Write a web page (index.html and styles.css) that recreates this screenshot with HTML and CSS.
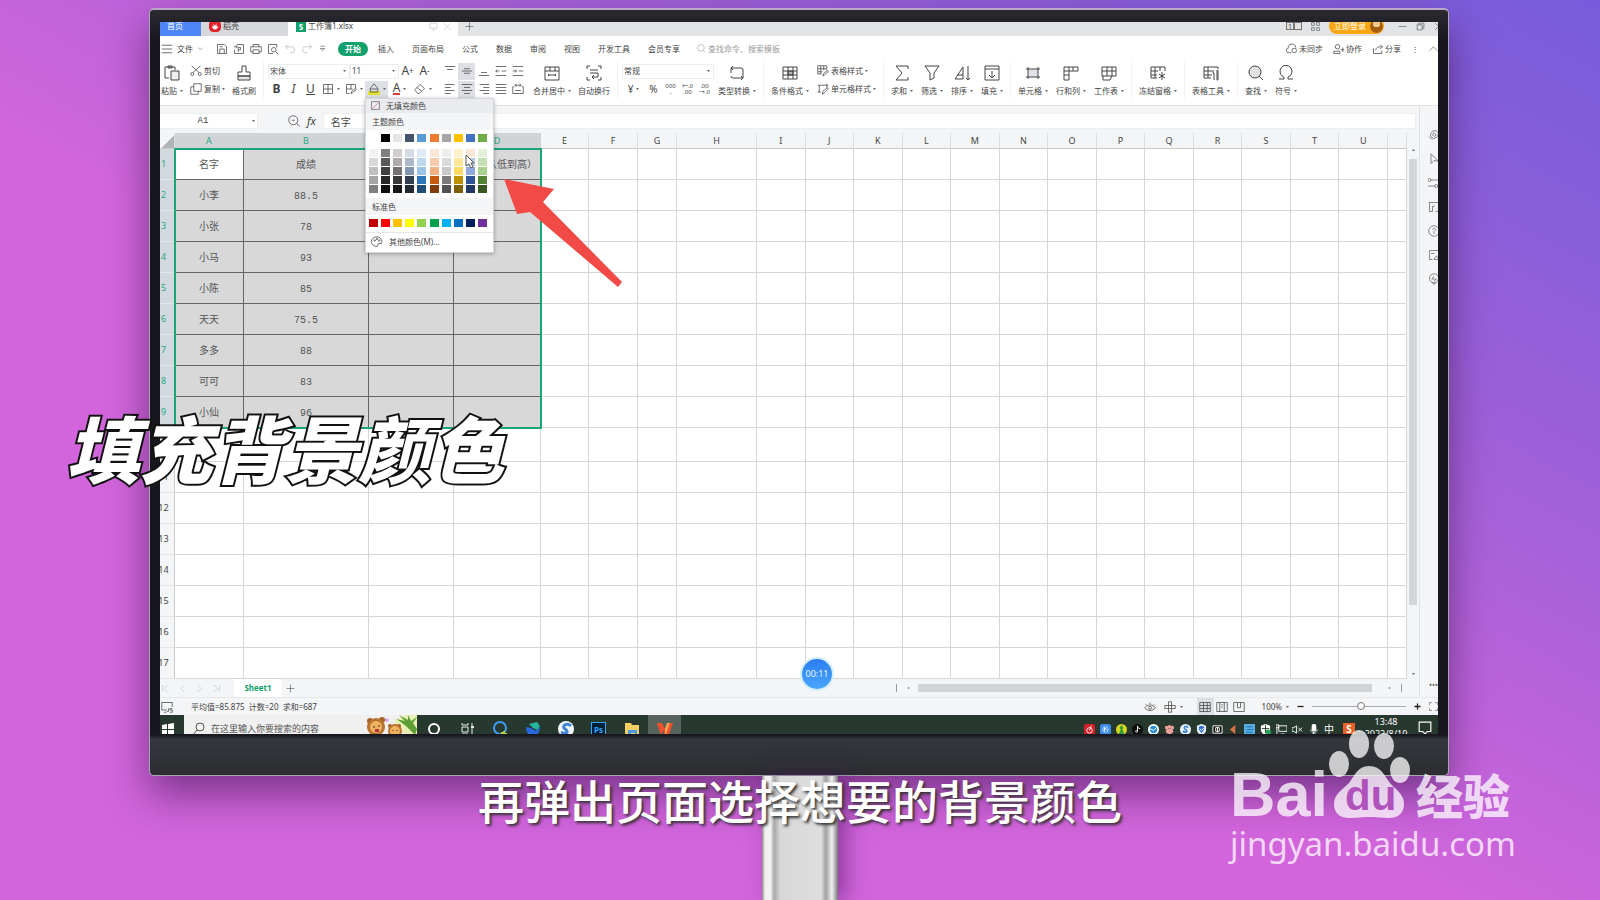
FILE: index.html
```html
<!DOCTYPE html>
<html lang="zh-CN">
<head>
  <meta charset="UTF-8">
  <title>填充背景颜色</title>
  <link rel="stylesheet" href="styles.css">
</head>
<body>

  <!-- Ícones reutilizados -->
  <svg class="sprite" aria-hidden="true">
    <symbol id="i-caret" viewBox="0 0 6 4"><path d="M0 0h6L3 4z" fill="currentColor" stroke="none"/></symbol>
    <symbol id="i-menu" viewBox="0 0 16 16"><path d="M1 3h14M1 8h14M1 13h14"/></symbol>
    <symbol id="i-down" viewBox="0 0 16 16"><path d="M3 6l5 5 5-5"/></symbol>
    <symbol id="i-up" viewBox="0 0 16 16"><path d="M1 12l7-7 7 7"/></symbol>
    <symbol id="i-save" viewBox="0 0 16 16"><path d="M2 2h9l3 3v9H2zM5 14V8h6v6M5 5h4"/></symbol>
    <symbol id="i-pdf" viewBox="0 0 16 16"><path d="M5 2h9v12H2V9M1 5h5M4 3l2 2-2 2M7 12V6h3v3H7"/></symbol>
    <symbol id="i-print" viewBox="0 0 16 16"><path d="M4 5V2h8v3M4 12H1V5h14v7h-3M4 9h8v5H4z"/></symbol>
    <symbol id="i-preview" viewBox="0 0 16 16"><path d="M13 6V2H2v12h6M12 12l3 3"/><circle cx="9" cy="9" r="3"/></symbol>
    <symbol id="i-undo" viewBox="0 0 16 16"><path d="M5 2L2 5l3 3M2 5h8a4 4 0 010 8H8"/></symbol>
    <symbol id="i-redo" viewBox="0 0 16 16"><path d="M11 2l3 3-3 3M14 5H6a4 4 0 000 8h2"/></symbol>
    <symbol id="i-more" viewBox="0 0 16 16"><path d="M4 4h8M4 8l4 4 4-4z"/></symbol>
    <symbol id="i-search" viewBox="0 0 16 16"><circle cx="7" cy="7" r="6"/><path d="M11 11l4 4"/></symbol>
    <symbol id="i-zoom" viewBox="0 0 16 16"><circle cx="7" cy="7" r="6"/><path d="M11 11l5 4M5 7h4"/></symbol>
    <symbol id="i-find" viewBox="0 0 16 16"><circle cx="7" cy="7" r="6" fill="#dfe1e4"/><path d="M11 11l4 4"/></symbol>
    <symbol id="i-cloud" viewBox="0 0 16 16"><path d="M7 13H4a3 3 0 01-1-6 5 5 0 0110-1"/><circle cx="11" cy="10" r="3"/></symbol>
    <symbol id="i-user" viewBox="0 0 16 16"><circle cx="6" cy="5" r="3"/><path d="M1 14v-3h8v3zM13 6v6M10 9h5"/></symbol>
    <symbol id="i-share" viewBox="0 0 16 16"><path d="M2 7v7h11v-4M5 10c0-4 3-5 8-5M11 2l3 3-3 3"/></symbol>
    <symbol id="i-paste" viewBox="0 0 16 16"><path d="M5 13H1V2h10v3M4 1h4v2H4z"/><path d="M7 6h8v9H7z" fill="#eceef0"/></symbol>
    <symbol id="i-cut" viewBox="0 0 16 16"><circle cx="3" cy="12" r="2"/><circle cx="13" cy="12" r="2"/><path d="M2 1l10 9M14 1L4 10"/></symbol>
    <symbol id="i-copy" viewBox="0 0 16 16"><path d="M5 1h10v10H5zM5 5H1v10h10v-4"/></symbol>
    <symbol id="i-brush" viewBox="0 0 16 16"><path d="M2 11h12v4H2z" fill="#e4e6e9"/><path d="M6 1h4v6h4v4H2V7h4z"/></symbol>
    <symbol id="i-borders" viewBox="0 0 16 16"><path d="M2 2h12v12H2zM8 2v12M2 8h12"/></symbol>
    <symbol id="i-draw" viewBox="0 0 16 16"><path d="M14 7V2H2v12h4M2 8h8M8 2v6M8 14l1-3 5-4 1 2-5 4z"/></symbol>
    <symbol id="i-fill" viewBox="0 0 16 16"><path d="M0 11h16v5H0z" fill="#e5e02a" stroke="none"/><path d="M3 7l5-6 5 6v5H3zM3 8h10"/></symbol>
    <symbol id="i-eraser" viewBox="0 0 16 16"><path d="M1 9l7-7 6 5-7 7H5zM4 6l6 5"/></symbol>
    <symbol id="i-vtop" viewBox="0 0 16 16"><path d="M1 2h14M4 6h8"/></symbol>
    <symbol id="i-vmid" viewBox="0 0 16 16"><path d="M4 5h8M1 8h14M4 11h8"/></symbol>
    <symbol id="i-vbot" viewBox="0 0 16 16"><path d="M4 10h8M1 14h14"/></symbol>
    <symbol id="i-outdent" viewBox="0 0 16 16"><path d="M1 2h14M9 8h6M1 14h14M6 8H1M3 6L1 8l2 2"/></symbol>
    <symbol id="i-indent" viewBox="0 0 16 16"><path d="M1 2h14M9 8h6M1 14h14M1 8h5M4 6l2 2-2 2"/></symbol>
    <symbol id="i-left" viewBox="0 0 16 16"><path d="M1 2h13M1 6h8M1 10h13M1 14h8"/></symbol>
    <symbol id="i-center" viewBox="0 0 16 16"><path d="M1 2h14M4 6h8M1 10h14M4 14h8"/></symbol>
    <symbol id="i-right" viewBox="0 0 16 16"><path d="M2 2h13M7 6h8M2 10h13M7 14h8"/></symbol>
    <symbol id="i-just" viewBox="0 0 16 16"><path d="M1 2h14M1 6h14M1 10h14M1 14h14"/></symbol>
    <symbol id="i-spread" viewBox="0 0 16 16"><path d="M1 5v9h14V5M1 5h2M13 5h2M4 3h8M6 1L4 3l2 2M10 1l2 2-2 2M4 10h8"/></symbol>
    <symbol id="i-merge" viewBox="0 0 16 16"><path d="M1 2h14v13H1zM1 6h14M6 2v4M11 2v4M4 10h8M5 9l-1 1 1 1M11 9l1 1-1 1"/></symbol>
    <symbol id="i-wrap" viewBox="0 0 16 16"><path d="M1 4V1h3M12 1h3v3M15 12v3h-3M4 15H1v-3M4 5h8M4 8h8v4H7M8 10l-2 2 2 2"/></symbol>
    <symbol id="i-convert" viewBox="0 0 16 16"><path d="M2 8V3h10a2 2 0 012 2v3M4 1L2 3l2 2M14 8v5H4a2 2 0 01-2-2M12 11l2 2-2 2"/></symbol>
    <symbol id="i-cond" viewBox="0 0 16 16"><path d="M6 6h5v4H6z" fill="#b4b8be"/><path d="M1 2h14v12H1zM1 6h14M1 10h14M6 2v12M11 2v12"/></symbol>
    <symbol id="i-tstyle" viewBox="0 0 16 16"><path d="M6 12H1V1h12v5M1 5h12M5 1v11M9 1v6M1 9h6M8 15l1-4 5-4 1 2-5 4z"/></symbol>
    <symbol id="i-cstyle" viewBox="0 0 16 16"><path d="M3 13V3M1 3h14M13 1v5M1 12h4M7 15l1-4 6-5 1 2-5 5z"/></symbol>
    <symbol id="i-sum" viewBox="0 0 16 16"><path d="M14 4V1H2l6 7-6 7h12v-3"/></symbol>
    <symbol id="i-filter" viewBox="0 0 16 16"><path d="M1 1h14l-5 7v5l-4 2V8z"/></symbol>
    <symbol id="i-sort" viewBox="0 0 16 16"><path d="M1 14L9 2v12M3 10h6M1 14h8M14 1v14M12 13l2 2 2-2"/></symbol>
    <symbol id="i-filldown" viewBox="0 0 16 16"><path d="M1 1h14v14H1zM1 4h14M8 6v7M5 10l3 3 3-3"/></symbol>
    <symbol id="i-cell" viewBox="0 0 16 16"><path d="M3 4h10v8H3z" fill="#dfe3ea" stroke="none"/><path d="M3 2v12M13 2v12M1 4h14M1 12h14"/></symbol>
    <symbol id="i-rowcol" viewBox="0 0 16 16"><path d="M1 2h14v4H6v9H1zM1 6h5M1 10h5M6 2v4M10 2v4"/></symbol>
    <symbol id="i-sheet" viewBox="0 0 16 16"><path d="M1 2h14v9h-4l-2 4H2v-4H1zM1 6h14M6 2v9M11 2v9M1 11h10"/></symbol>
    <symbol id="i-freeze" viewBox="0 0 16 16"><path d="M7 13H1V2h14v4M1 6h7M1 10h6M5 2v11M10 2v4M12 7v8M9 9l6 4M15 9l-6 4"/></symbol>
    <symbol id="i-tools" viewBox="0 0 16 16"><path d="M8 13H1V2h14v2M1 6h8M1 10h8M5 2v11M10 5v3h1v7M14 5v10h1V5"/></symbol>
    <symbol id="i-omega" viewBox="0 0 16 16"><path d="M1 14h5v-2a6 6 0 114 0v2h5"/></symbol>
    <symbol id="i-palette" viewBox="0 0 16 16"><path d="M8 1a7 6 0 000 13c2 0 0-3 2-4h4c2-4-2-9-6-9z"/><circle cx="5" cy="6" r="1"/><circle cx="8" cy="4" r="1"/><circle cx="11" cy="6" r="1"/></symbol>
    <symbol id="i-first" viewBox="0 0 16 16"><path d="M3 2v12M12 2L6 8l6 6"/></symbol>
    <symbol id="i-prev" viewBox="0 0 16 16"><path d="M11 2L5 8l6 6"/></symbol>
    <symbol id="i-next" viewBox="0 0 16 16"><path d="M5 2l6 6-6 6"/></symbol>
    <symbol id="i-last" viewBox="0 0 16 16"><path d="M13 2v12M4 2l6 6-6 6"/></symbol>
    <symbol id="i-plus" viewBox="0 0 16 16"><path d="M8 1v14M1 8h14"/></symbol>
    <symbol id="i-minus" viewBox="0 0 16 16"><path d="M1 8h14"/></symbol>
    <symbol id="i-close" viewBox="0 0 16 16"><path d="M2 2l12 12M14 2L2 14"/></symbol>
    <symbol id="i-screen" viewBox="0 0 16 16"><path d="M2 2h12v9H2zM5 14h6"/></symbol>
    <symbol id="i-js" viewBox="0 0 16 16"><path d="M8 12H1V2h14v6M4 15h3M10 10v4H8M15 10h-3v2h3v3h-3"/></symbol>
    <symbol id="i-restore" viewBox="0 0 16 16"><path d="M2 5h9v9H2zM5 5V2h9v9h-3"/></symbol>
    <symbol id="i-apps" viewBox="0 0 16 16"><path d="M1 1h5v5H1zM10 1h5v5h-5zM1 10h5v5H1zM10 10h5v5h-5z"/></symbol>
    <symbol id="i-eye" viewBox="0 0 16 16"><path d="M1 9c3-5 11-5 14 0-3 5-11 5-14 0zM2 4l1 1M8 2v2M14 4l-1 1"/><circle cx="8" cy="9" r="2"/></symbol>
    <symbol id="i-cross" viewBox="0 0 16 16"><path d="M6 1h4v14H6zM1 6h14v4H1z"/></symbol>
    <symbol id="i-grid" viewBox="0 0 16 16"><path d="M1 2h14v12H1zM1 6h14M1 10h14M6 2v12M11 2v12"/></symbol>
    <symbol id="i-page" viewBox="0 0 16 16"><path d="M1 2h14v12H1zM5 2v12M11 2v12M7 5h2M7 8h2"/></symbol>
    <symbol id="i-split" viewBox="0 0 16 16"><path d="M1 2h14v12H1zM6 2v7h4V2"/></symbol>
    <symbol id="i-full" viewBox="0 0 16 16"><path d="M1 5V1h4M11 1h4v4M15 11v4h-4M5 15H1v-4"/></symbol>
    <symbol id="i-rocket" viewBox="0 0 16 16"><path d="M3 8l3-5 5-1 3 4-2 5-5 2zM6 8l2-3 3 3-3 2zM1 10l5 4"/></symbol>
    <symbol id="i-arrow" viewBox="0 0 16 16"><path d="M4 1v13l4-4 6 1z"/></symbol>
    <symbol id="i-sliders" viewBox="0 0 16 16"><path d="M4 4h12M0 12h9M13 12h3"/><circle cx="2" cy="4" r="2"/><circle cx="11" cy="12" r="2"/></symbol>
    <symbol id="i-chart" viewBox="0 0 16 16"><path d="M1 2h14M2 2v12h4M6 14V7h3M10 14h5"/></symbol>
    <symbol id="i-help" viewBox="0 0 16 16"><circle cx="8" cy="8" r="7"/><path d="M6 6c1-3 5-1 4 1L8 9v3"/></symbol>
    <symbol id="i-image" viewBox="0 0 16 16"><path d="M2 6V2h12v5M2 6v8h4M4 6h5M8 14l3-5 4 5z"/></symbol>
    <symbol id="i-bulb" viewBox="0 0 16 16"><circle cx="8" cy="7" r="6"/><path d="M5 13l3 2 3-2M8 4L5 8h6l-3 3"/></symbol>
    <symbol id="i-shell" viewBox="0 0 16 16"><rect width="16" height="16" rx="6" fill="#e3232c" stroke="none"/><path d="M4 8c0 6 8 6 8 0l-2 1V4L8 8 6 5v4z" fill="#fff" stroke="none"/></symbol>
  </svg>

  <div class="monitor">
    <div class="screen">
      <div class="app">

        <!-- Abas de documentos -->
        <div class="doc-tabs">
          <a class="doc-tab home" href="#home">首页</a>
          <a class="doc-tab shell" href="#shell"><svg class="icon"><use href="#i-shell"/></svg>稻壳</a>
          <a class="doc-tab current" href="#book"><span class="s-logo">S</span>工作簿1.xlsx
            <span class="tab-icons"><svg class="icon small"><use href="#i-screen"/></svg><svg class="icon small"><use href="#i-close"/></svg></span></a>
          <button class="tool plus" aria-label="新建"><svg class="icon small"><use href="#i-plus"/></svg></button>
          <div class="window-tools">
            <span class="pages"><i>1</i><i></i></span>
            <svg class="icon small"><use href="#i-apps"/></svg>
            <button class="login">立即登录<span class="avatar"></span></button>
            <svg class="icon small"><use href="#i-minus"/></svg>
            <svg class="icon small"><use href="#i-restore"/></svg>
            <svg class="icon small"><use href="#i-close"/></svg>
          </div>
        </div>

        <!-- Menu -->
        <nav class="menu">
          <button class="tool file"><svg class="icon"><use href="#i-menu"/></svg>文件<svg class="icon tiny"><use href="#i-down"/></svg></button>
          <div class="quick">
            <svg class="icon"><use href="#i-save"/></svg>
            <svg class="icon"><use href="#i-pdf"/></svg>
            <svg class="icon"><use href="#i-print"/></svg>
            <svg class="icon"><use href="#i-preview"/></svg>
            <svg class="icon faint"><use href="#i-undo"/></svg>
            <svg class="icon faint"><use href="#i-redo"/></svg>
            <svg class="icon small"><use href="#i-more"/></svg>
          </div>
          <div class="menu-links">
            <a class="active" href="#start">开始</a>
            <a href="#insert">插入</a>
            <a href="#layout">页面布局</a>
            <a href="#formula">公式</a>
            <a href="#data">数据</a>
            <a href="#review">审阅</a>
            <a href="#view">视图</a>
            <a href="#dev">开发工具</a>
            <a href="#vip">会员专享</a>
          </div>
          <label class="command"><svg class="icon small"><use href="#i-search"/></svg><input type="text" placeholder="查找命令、搜索模板"></label>
          <div class="menu-right">
            <button class="tool"><svg class="icon"><use href="#i-cloud"/></svg>未同步</button>
            <button class="tool"><svg class="icon"><use href="#i-user"/></svg>协作</button>
            <button class="tool"><svg class="icon"><use href="#i-share"/></svg>分享</button>
            <span class="dots">⋮</span>
            <svg class="icon small"><use href="#i-up"/></svg>
          </div>
        </nav>

        <!-- Faixa de opções -->
        <div class="ribbon">
          <div class="group">
            <button class="big"><svg class="icon"><use href="#i-paste"/></svg><span>粘贴<svg class="caret"><use href="#i-caret"/></svg></span></button>
            <div class="stack">
              <button class="tool"><svg class="icon"><use href="#i-cut"/></svg>剪切</button>
              <button class="tool"><svg class="icon"><use href="#i-copy"/></svg>复制<svg class="caret"><use href="#i-caret"/></svg></button>
            </div>
            <button class="big"><svg class="icon"><use href="#i-brush"/></svg><span>格式刷</span></button>
          </div>

          <div class="group tight">
            <div class="stack">
              <div class="line">
                <span class="pick font"><select aria-label="字体"><option>宋体</option></select><svg class="caret"><use href="#i-caret"/></svg></span>
                <span class="pick size"><select aria-label="字号"><option>11</option></select><svg class="caret"><use href="#i-caret"/></svg></span>
                <button class="cell letter">A<sup>+</sup></button>
                <button class="cell letter">A<sup>-</sup></button>
              </div>
              <div class="line">
                <button class="cell letter"><b>B</b></button>
                <button class="cell letter"><i>I</i></button>
                <button class="cell letter"><u>U</u></button>
                <button class="cell split"><svg class="icon"><use href="#i-borders"/></svg><svg class="caret"><use href="#i-caret"/></svg></button>
                <button class="cell split"><svg class="icon"><use href="#i-draw"/></svg><svg class="caret"><use href="#i-caret"/></svg></button>
                <div class="fill-wrap">
                  <button class="cell split on" aria-label="填充颜色"><svg class="icon"><use href="#i-fill"/></svg><svg class="caret"><use href="#i-caret"/></svg></button>
                  <div class="palette">
                    <button class="no-fill"><svg class="icon none" viewBox="0 0 16 16"><path d="M1 1h14v14H1z"/><path d="M2 14L14 2" stroke="#d0557a"/></svg>无填充颜色</button>
                    <div class="palette-title">主题颜色</div>
                    <div class="swatches" id="themeColors"></div>
                    <div class="swatches shades" id="shadeColors"></div>
                    <div class="palette-title standard">标准色</div>
                    <div class="swatches" id="standardColors"></div>
                    <button class="other"><svg class="icon"><use href="#i-palette"/></svg>其他颜色(M)...</button>
                    <svg class="pointer" viewBox="0 0 10 14"><path d="M1 1v11l3-2 2 4 2-1-2-4h3z" fill="#fff" stroke="#555"/></svg>
                  </div>
                </div>
                <button class="cell split letter"><span class="font-color">A</span><svg class="caret"><use href="#i-caret"/></svg></button>
                <button class="cell split"><svg class="icon"><use href="#i-eraser"/></svg><svg class="caret"><use href="#i-caret"/></svg></button>
              </div>
            </div>
            <div class="stack">
              <div class="line">
                <button class="cell"><svg class="icon"><use href="#i-vtop"/></svg></button>
                <button class="cell on"><svg class="icon"><use href="#i-vmid"/></svg></button>
                <button class="cell"><svg class="icon"><use href="#i-vbot"/></svg></button>
                <button class="cell"><svg class="icon"><use href="#i-outdent"/></svg></button>
                <button class="cell"><svg class="icon"><use href="#i-indent"/></svg></button>
              </div>
              <div class="line">
                <button class="cell"><svg class="icon"><use href="#i-left"/></svg></button>
                <button class="cell on"><svg class="icon"><use href="#i-center"/></svg></button>
                <button class="cell"><svg class="icon"><use href="#i-right"/></svg></button>
                <button class="cell"><svg class="icon"><use href="#i-just"/></svg></button>
                <button class="cell"><svg class="icon"><use href="#i-spread"/></svg></button>
              </div>
            </div>
            <button class="big"><svg class="icon"><use href="#i-merge"/></svg><span>合并居中<svg class="caret"><use href="#i-caret"/></svg></span></button>
            <button class="big"><svg class="icon"><use href="#i-wrap"/></svg><span>自动换行</span></button>
          </div>

          <div class="group tight number">
            <div class="stack">
              <div class="line">
                <span class="pick format"><select aria-label="数字格式"><option>常规</option></select><svg class="caret"><use href="#i-caret"/></svg></span>
              </div>
              <div class="line">
                <button class="cell split letter">¥<svg class="caret"><use href="#i-caret"/></svg></button>
                <button class="cell letter">%</button>
                <button class="cell decimals">000<br>,</button>
                <button class="cell decimals">←.0<br>.00</button>
                <button class="cell decimals">.00<br>→.0</button>
              </div>
            </div>
            <button class="big"><svg class="icon"><use href="#i-convert"/></svg><span>类型转换<svg class="caret"><use href="#i-caret"/></svg></span></button>
          </div>

          <div class="group">
            <button class="big"><svg class="icon"><use href="#i-cond"/></svg><span>条件格式<svg class="caret"><use href="#i-caret"/></svg></span></button>
            <div class="stack">
              <button class="tool"><svg class="icon"><use href="#i-tstyle"/></svg>表格样式<svg class="caret"><use href="#i-caret"/></svg></button>
              <button class="tool"><svg class="icon"><use href="#i-cstyle"/></svg>单元格样式<svg class="caret"><use href="#i-caret"/></svg></button>
            </div>
          </div>

          <div class="group">
            <button class="big"><svg class="icon"><use href="#i-sum"/></svg><span>求和<svg class="caret"><use href="#i-caret"/></svg></span></button>
            <button class="big"><svg class="icon"><use href="#i-filter"/></svg><span>筛选<svg class="caret"><use href="#i-caret"/></svg></span></button>
            <button class="big"><svg class="icon"><use href="#i-sort"/></svg><span>排序<svg class="caret"><use href="#i-caret"/></svg></span></button>
            <button class="big"><svg class="icon"><use href="#i-filldown"/></svg><span>填充<svg class="caret"><use href="#i-caret"/></svg></span></button>
          </div>

          <div class="group">
            <button class="big"><svg class="icon"><use href="#i-cell"/></svg><span>单元格<svg class="caret"><use href="#i-caret"/></svg></span></button>
            <button class="big"><svg class="icon"><use href="#i-rowcol"/></svg><span>行和列<svg class="caret"><use href="#i-caret"/></svg></span></button>
            <button class="big"><svg class="icon"><use href="#i-sheet"/></svg><span>工作表<svg class="caret"><use href="#i-caret"/></svg></span></button>
          </div>

          <div class="group">
            <button class="big"><svg class="icon"><use href="#i-freeze"/></svg><span>冻结窗格<svg class="caret"><use href="#i-caret"/></svg></span></button>
          </div>
          <div class="group">
            <button class="big"><svg class="icon"><use href="#i-tools"/></svg><span>表格工具<svg class="caret"><use href="#i-caret"/></svg></span></button>
          </div>
          <div class="group">
            <button class="big"><svg class="icon"><use href="#i-find"/></svg><span>查找<svg class="caret"><use href="#i-caret"/></svg></span></button>
            <button class="big"><svg class="icon"><use href="#i-omega"/></svg><span>符号<svg class="caret"><use href="#i-caret"/></svg></span></button>
          </div>
        </div>

        <div class="work">
          <div class="book">
            <!-- Barra de fórmulas -->
            <div class="formula">
              <label class="name-box"><input type="text" value="A1" aria-label="名称框"><svg class="caret"><use href="#i-caret"/></svg></label>
              <svg class="icon"><use href="#i-zoom"/></svg>
              <span class="fx">fx</span>
              <input class="formula-input" type="text" value="名字" aria-label="编辑栏">
            </div>

            <!-- Planilha -->
            <div class="sheet">
              <div class="cells">
                <table id="grid">
                  <colgroup id="gridCols"></colgroup>
                  <thead></thead>
                  <tbody></tbody>
                </table>
                <div class="selection"></div>
              </div>
              <div class="vscroll"><svg class="caret flip"><use href="#i-caret"/></svg><span class="thumb"></span><svg class="caret"><use href="#i-caret"/></svg></div>
            </div>

            <div class="sheet-tabs">
              <svg class="icon small faint"><use href="#i-first"/></svg>
              <svg class="icon small faint"><use href="#i-prev"/></svg>
              <svg class="icon small faint"><use href="#i-next"/></svg>
              <svg class="icon small faint"><use href="#i-last"/></svg>
              <a href="#sheet1">Sheet1</a>
              <button class="tool" aria-label="新建工作表"><svg class="icon small"><use href="#i-plus"/></svg></button>
              <div class="hscroll"><svg class="caret toleft"><use href="#i-caret"/></svg><span class="thumb"></span><svg class="caret toright"><use href="#i-caret"/></svg></div>
            </div>
          </div>

          <aside class="side">
            <svg class="icon"><use href="#i-rocket"/></svg>
            <svg class="icon"><use href="#i-arrow"/></svg>
            <svg class="icon"><use href="#i-sliders"/></svg>
            <svg class="icon"><use href="#i-chart"/></svg>
            <svg class="icon"><use href="#i-help"/></svg>
            <svg class="icon"><use href="#i-image"/></svg>
            <svg class="icon"><use href="#i-bulb"/></svg>
            <span class="side-more">•••</span>
          </aside>
        </div>

        <!-- Barra de status -->
        <div class="status">
          <svg class="icon"><use href="#i-js"/></svg>
          <span class="stats">平均值=85.875&nbsp; 计数=20&nbsp; 求和=687</span>
          <div class="status-right">
            <svg class="icon"><use href="#i-eye"/></svg>
            <span class="pair"><svg class="icon"><use href="#i-cross"/></svg><svg class="caret"><use href="#i-caret"/></svg></span>
            <span class="views">
              <button class="cell on" aria-label="普通视图"><svg class="icon"><use href="#i-grid"/></svg></button>
              <button class="cell" aria-label="页面布局"><svg class="icon"><use href="#i-page"/></svg></button>
              <button class="cell" aria-label="分页预览"><svg class="icon"><use href="#i-split"/></svg></button>
            </span>
            <span class="pair">100%<svg class="caret"><use href="#i-caret"/></svg></span>
            <svg class="icon tiny bold"><use href="#i-minus"/></svg>
            <input type="range" min="0" max="100" value="52" aria-label="缩放">
            <svg class="icon tiny bold"><use href="#i-plus"/></svg>
            <svg class="icon small"><use href="#i-full"/></svg>
          </div>
        </div>

        <!-- Barra de tarefas -->
        <div class="taskbar">
          <button class="start" aria-label="开始"><svg viewBox="0 0 12 12"><path d="M0 2l5-1v5H0zM6 1l6-1v6H6zM0 7h5v5l-5-1zM6 7h6v5H6z" fill="#fff"/></svg></button>
          <label class="task-search">
            <svg class="icon"><circle cx="7" cy="4" r="4"/><path d="M4 7l-4 5"/></svg>
            <input type="text" placeholder="在这里输入你要搜索的内容">
            <svg class="bears" viewBox="0 0 50 20">
              <path d="M27 6l12-6h11v20H38z" fill="#e8efb4"/>
              <path d="M29 4l9 2-6-6 9 5 0-5 3 6 6-4-4 6 4 6-2 6c-5-5-9-10-19-16z" fill="#5e9e35"/>
              <path d="M19 3l3 2-2 2-3-2z" fill="#d49be4"/>
              <circle cx="3" cy="6" r="3" fill="#a5642d"/><circle cx="15" cy="5" r="3" fill="#a5642d"/>
              <circle cx="9" cy="12" r="9" fill="#b8732f"/><circle cx="9" cy="12" r="6" fill="#f0b15f"/>
              <circle cx="23" cy="11" r="2" fill="#a5642d"/><circle cx="32" cy="11" r="2" fill="#a5642d"/>
              <circle cx="28" cy="16" r="7" fill="#b8732f"/><circle cx="28" cy="16" r="5" fill="#f0b15f"/>
              <path d="M7 11v2M12 10v2M26 15v1M30 15v1" stroke="#4a2a14"/><path d="M8 14h4v3H8z" fill="#b0333e"/>
            </svg>
          </label>
          <div class="apps">
            <span><svg viewBox="0 0 16 16"><circle cx="8" cy="8" r="5" fill="none" stroke="#fff" stroke-width="2"/></svg></span>
            <span><svg viewBox="0 0 16 16" fill="none" stroke="#e6ebe8"><path d="M3 2v2h6V2M3 6h6v5H3zM3 15v-2h6v2M13 2v13"/><path d="M12 6h3" stroke-width="2"/></svg></span>
            <span><svg viewBox="0 0 16 16" fill="none" stroke-width="2"><circle cx="8" cy="7" r="6" stroke="#3c9cf0"/><path d="M9 12l6 1M12 10v5" stroke="#b8d63c"/></svg></span>
            <span><svg viewBox="0 0 16 16"><path d="M1 6c0 12 14 12 14 0l-4 4-5-3z" fill="#2867dc"/><path d="M4 3l8-2 3 4-3 4-4-2z" fill="#25b5a0"/></svg></span>
            <span><svg viewBox="0 0 16 16"><circle cx="8" cy="8" r="8" fill="#f2f6fa"/><path d="M13 5C9 1 3 5 7 8s2 6-4 3" fill="none" stroke="#3f86d8" stroke-width="3"/></svg></span>
            <span><b class="ps">Ps</b></span>
            <span><svg viewBox="0 0 16 16"><path d="M1 2h6l1 2h7v12H1z" fill="#f4cf63"/><path d="M4 9h9v7h-2v-4H7v4H4z" fill="#4b9ade"/></svg></span>
            <span class="running"><svg viewBox="0 0 16 16"><path d="M0 2h5l3 6 2-6h6l-5 14H8L6 9l-2 6z" fill="#f0502b"/><path d="M8 8l2-6h3L8 16z" fill="#ffa24d"/></svg></span>
          </div>
          <div class="tray">
            <span><svg viewBox="0 0 12 12"><rect width="12" height="12" rx="2" fill="#d32127"/><circle cx="6" cy="7" r="3" fill="none" stroke="#fff"/><path d="M6 7l2-5" stroke="#fff"/></svg></span>
            <span><svg viewBox="0 0 12 12"><rect width="12" height="12" rx="3" fill="#3d8de8"/><circle cx="6" cy="6" r="3" fill="none" stroke="#bfe0ff"/><path d="M5 8V4l3 3" fill="none" stroke="#fff"/></svg></span>
            <span><svg viewBox="0 0 12 12"><circle cx="6" cy="6" r="6" fill="#d6d51f"/><path d="M6 1l2 3-1 2 2 5H3l2-5-1-2z" fill="#2f9e3c"/></svg></span>
            <span><svg viewBox="0 0 12 12"><circle cx="6" cy="6" r="6" fill="#0c0c0c"/><path d="M6 8a1 1 0 11-1-1M6 8V2c0 2 1 3 3 3" fill="none" stroke="#fff"/></svg></span>
            <span><svg viewBox="0 0 12 12"><circle cx="6" cy="6" r="6" fill="#fff"/><circle cx="6" cy="6" r="4" fill="#2d8fd8"/><path d="M2 5l4 2 3-3" fill="none" stroke="#fff"/></svg></span>
            <span><svg viewBox="0 0 12 12" fill="#e9a19c"><circle cx="3" cy="4" r="2"/><circle cx="6" cy="3" r="2"/><circle cx="9" cy="4" r="2"/><ellipse cx="6" cy="8" rx="4" ry="3"/></svg></span>
            <span><svg viewBox="0 0 12 12"><circle cx="6" cy="6" r="6" fill="#eaf2fb"/><path d="M9 4C6 1 3 4 6 6s1 4-3 2" fill="none" stroke="#3f86d8" stroke-width="2"/></svg></span>
            <span><svg viewBox="0 0 12 12"><path d="M6 0l5 2v4c0 3-2 5-5 6-3-1-5-3-5-6V2z" fill="#eef4fd"/><path d="M6 2l3 1v3L6 10 3 6V3z" fill="#2f6fdc"/><path d="M4 5l2 2 3-3" fill="none" stroke="#fff"/></svg></span>
            <span><svg viewBox="0 0 12 12" fill="none" stroke="#fff"><path d="M1 2h10v8H1z" fill="#111"/><path d="M4 4h4v4H4zM6 3v6"/></svg></span>
            <span><svg viewBox="0 0 12 12"><path d="M2 6l6-5v10z" fill="#d87343"/></svg></span>
            <span><svg viewBox="0 0 12 12"><path d="M0 0h12v12H0z" fill="#58aee2"/><path d="M2 3h7M3 6h7M2 9h7" stroke="#1f6fae"/></svg></span>
            <span><svg viewBox="0 0 12 12"><path d="M6 0l5 2v4c0 3-2 5-5 6-3-1-5-3-5-6V2z" fill="#fff"/><path d="M6 1v9M2 5h8" stroke="#27382f"/><circle cx="9" cy="9" r="3" fill="#25a55a"/></svg></span>
            <span><svg viewBox="0 0 12 12" fill="none" stroke="#fff"><path d="M3 2h9v6H3zM5 11h5M0 1h3v3H0zM1 4v7"/></svg></span>
            <span><svg viewBox="0 0 12 12" fill="none" stroke="#fff"><path d="M0 4h2l3-2v8L2 8H0zM7 4l4 4M11 4L7 8"/></svg></span>
            <span><svg viewBox="0 0 12 12"><rect x="4" y="0" width="5" height="8" rx="2" fill="#fff"/><path d="M3 6c0 4 7 4 7 0M6 9v3M4 11h5" fill="none" stroke="#fff"/></svg></span>
            <span>中</span>
            <span class="sogou">S</span>
          </div>
          <div class="clock">13:48<br>2022/8/19</div>
          <svg class="notice" viewBox="0 0 12 12" fill="none" stroke="#fff"><path d="M1 1h10v8H8l-2 2-2-2H1z"/></svg>
        </div>
      </div>
      <div class="timer">00:11</div>
    </div>
  </div>
  <div class="stand"></div>

  <svg class="red-arrow" viewBox="0 0 122 110"><path d="M2 0L52 10 41 23 120 103 116 108 28 33 15 35z" fill="#f24a46"/></svg>
  <h1 class="headline">填充背景颜色</h1>
  <p class="caption">再弹出页面选择想要的背景颜色</p>

  <div class="watermark">
    <div class="brand">
      <span class="bai">Bai</span>
      <span class="paw">
        <svg viewBox="0 0 84 90" fill="currentColor">
          <ellipse cx="11" cy="34" rx="10" ry="13"/>
          <ellipse cx="31" cy="14" rx="10" ry="14"/>
          <ellipse cx="56" cy="16" rx="10" ry="13"/>
          <ellipse cx="72" cy="40" rx="10" ry="13"/>
          <path d="M41 36c-11 0-14 9-20 17-6 6-15 11-15 21 0 9 6 14 15 14 8 0 13-1 20-1s12 1 20 1c10 0 15-6 15-14 0-10-8-14-14-21-6-8-9-17-21-17z"/>
        </svg>
        <b>du</b>
      </span>
      <span class="jingyan">经验</span>
    </div>
    <div class="site">jingyan.baidu.com</div>
  </div>

  <script>
  const colunas = 'ABCDEFGHIJKLMNOPQRSTU'.split('');
  const dados = [
    ['名字', '成绩', '', '排序（从低到高）'],
    ['小李', '88.5', '', ''],
    ['小张', '78', '', ''],
    ['小马', '93', '', ''],
    ['小陈', '85', '', ''],
    ['天天', '75.5', '', ''],
    ['多多', '88', '', ''],
    ['可可', '83', '', ''],
    ['小仙', '96', '', '']
  ];

  // larguras: as colunas de I a U dividem o espaço que sobra
  document.getElementById('gridCols').innerHTML =
    '<col class="col-num">' +
    colunas.map(c => `<col class="col-${c.toLowerCase()}">`).join('') +
    '<col class="col-end">';

  document.querySelector('#grid thead').innerHTML =
    '<tr><th class="corner"></th>' +
    colunas.map((c, i) => `<th class="${i < 4 ? 'picked' : ''}">${c}</th>`).join('') +
    '<th></th></tr>';

  const tbody = document.querySelector('#grid tbody');
  for (let r = 1; r <= 17; r++) {
    const row = document.createElement('tr');
    const linha = dados[r - 1];
    if (linha) row.classList.add('filled');
    if (r === 10) row.classList.add('tall');
    row.innerHTML = `<th>${r}</th>` +
      colunas.map((c, i) => `<td>${linha && linha[i] ? linha[i] : ''}</td>`).join('') +
      '<td></td>';
    tbody.appendChild(row);
  }

  const tema = ['#ffffff', '#000000', '#e7e6e6', '#44546a', '#5b9bd5', '#ed7d31', '#a5a5a5', '#ffc000', '#4472c4', '#70ad47'];
  const tons = [
    ['#f2f2f2', '#7f7f7f', '#d0cece', '#d6dce5', '#deebf7', '#fbe5d6', '#ededed', '#fff2cc', '#fbe5d6', '#e2f0d9'],
    ['#d9d9d9', '#595959', '#afabab', '#adb9ca', '#bdd7ee', '#f8cbad', '#dbdbdb', '#ffe699', '#b4c7e7', '#c5e0b4'],
    ['#bfbfbf', '#404040', '#767171', '#8497b0', '#9dc3e6', '#f4b183', '#c9c9c9', '#ffd966', '#8faadc', '#a9d18e'],
    ['#a6a6a6', '#262626', '#3b3838', '#333f50', '#2e75b6', '#c55a11', '#7b7b7b', '#bf9000', '#2f5597', '#548235'],
    ['#808080', '#0d0d0d', '#181717', '#222a35', '#1f4e79', '#843c0c', '#525252', '#7f6000', '#203864', '#385723']
  ];
  const padrao = ['#c00000', '#ff0000', '#ffc000', '#ffff00', '#92d050', '#00a050', '#00b0f0', '#0070c0', '#002060', '#7030a0'];

  function mostrarCores(id, cores) {
    document.getElementById(id).innerHTML =
      cores.map(c => `<button aria-label="${c}" style="background:${c}"></button>`).join('');
  }

  mostrarCores('themeColors', tema);
  mostrarCores('shadeColors', tons.flat());
  mostrarCores('standardColors', padrao);
  </script>
</body>
</html>
```
FILE: styles.css
```css
* {
  margin: 0;
  padding: 0;
  box-sizing: border-box;
}

body {
  position: relative;
  display: flex;
  flex-direction: column;
  min-height: 100vh;
  overflow: hidden;
  font-family: "Noto Sans", "Noto Sans CJK SC", sans-serif;
  font-size: 8px;
  line-height: 12px;
  color: #444;
  background: linear-gradient(208deg, #765cdc 0%, #9b60d8 26%, #d265dc 56%, #d265dc 100%);
}

button, input, select {
  font: inherit;
  color: inherit;
  background: none;
  border: none;
  outline: none;
}

a {
  color: inherit;
  text-decoration: none;
}

.sprite {
  position: absolute;
  width: 0;
  height: 0;
}

.icon {
  width: 12px;
  height: 12px;
  flex: none;
  fill: none;
  stroke: currentColor;
  stroke-width: 1;
  overflow: visible;
}

.icon.small {
  width: 9px;
  height: 9px;
}

.icon.tiny {
  width: 7px;
  height: 7px;
}

.icon.bold {
  stroke: #222;
  stroke-width: 3;
}

.icon.faint {
  color: #b4b8bc;
}

.caret {
  width: 3px;
  height: 2px;
  flex: none;
  color: #666;
}

.caret.flip {
  transform: rotate(180deg);
}

.caret.toleft {
  transform: rotate(90deg);
}

.caret.toright {
  transform: rotate(-90deg);
}

/* Monitor */
.monitor {
  margin: 8px 151px 0 149px;
  padding: 12px 10px 41px;
  border: 1px solid #a9a4b2;
  border-top: 2px solid #b9a8cc;
  border-radius: 5px;
  background: linear-gradient(#2a2a30, #17171d 30px, #17171d calc(100% - 40px), #34373c calc(100% - 36px), #2b2d31);
  box-shadow: 0 18px 40px rgba(60, 20, 80, 0.6);
}

.screen {
  position: relative;
  overflow: hidden;
}

/* a janela passa um pouco das bordas da tela */
.app {
  margin: -8px -9px -9px -7px;
  background: #f4f5f7;
}

/* Abas de documentos */
.doc-tabs {
  display: flex;
  height: 22px;
  background: #e1e3e5;
}

.doc-tab {
  display: flex;
  align-items: center;
  gap: 2px;
  padding-top: 2px;
}

.doc-tab.home {
  width: 48px;
  padding-left: 14px;
  color: #fff;
  background: #4e86f7;
}

.doc-tab.shell {
  width: 87px;
  padding-left: 8px;
  background: #d6d8db;
}

.doc-tab.current {
  width: 170px;
  padding-right: 6px;
  padding-left: 8px;
  background: #fff;
}

.tab-icons {
  display: flex;
  gap: 5px;
  margin-left: auto;
  color: #b4b8bc;
}

.s-logo {
  width: 10px;
  height: 11px;
  line-height: 11px;
  text-align: center;
  font-weight: bold;
  color: #fff;
  background: #12a06c;
}

.plus {
  margin-left: 7px;
  padding-top: 2px;
}

.window-tools {
  display: flex;
  align-items: center;
  gap: 9px;
  margin-left: auto;
  padding: 2px 4px 0 0;
}

.pages {
  display: flex;
  height: 8px;
  line-height: 8px;
}

.pages i {
  width: 8px;
  border: 1px solid #777;
  font-style: normal;
  font-size: 7px;
  line-height: 7px;
  text-align: center;
}

.login {
  display: flex;
  align-items: center;
  gap: 4px;
  height: 16px;
  margin-right: 5px;
  padding: 0 1px 0 5px;
  border-radius: 8px;
  color: #fff;
  background: #f9a813;
}

.avatar {
  width: 13px;
  height: 13px;
  border-radius: 50%;
  background: radial-gradient(circle at 50% 30%, #f7c98c 30%, #a45e10 32%);
}

/* Menu */
.menu {
  display: flex;
  align-items: center;
  height: 25px;
  padding-left: 8px;
  background: #fff;
}

.tool {
  display: flex;
  align-items: center;
  gap: 2px;
  white-space: nowrap;
}

.file {
  gap: 4px;
}

.quick {
  display: flex;
  align-items: center;
  gap: 5px;
  margin-left: 12px;
}

.menu-links {
  display: flex;
  align-items: center;
  gap: 18px;
  margin-left: 11px;
}

.menu-links .active {
  padding: 0 7px;
  margin-right: -8px;
  line-height: 14px;
  border-radius: 7px;
  font-weight: bold;
  color: #fff;
  background: #12a06c;
}

.command {
  display: flex;
  align-items: center;
  gap: 2px;
  margin-left: 17px;
  color: #999;
}

.command input {
  width: 80px;
}

.command input::placeholder {
  color: #999;
}

.menu-right {
  display: flex;
  align-items: center;
  gap: 10px;
  margin-left: auto;
  padding-right: 9px;
}

.menu-right .tool {
  gap: 1px;
}

/* Faixa de opções */
.ribbon {
  display: flex;
  height: 45px;
  padding: 1px 0 0 8px;
  border-bottom: 1px solid #e0e2e4;
  background: #fff;
}

.group {
  display: flex;
  gap: 8px;
  height: 36px;
  padding: 0 7px;
  border-left: 1px solid #f0f1f2;
}

.group:first-child {
  padding-left: 0;
  gap: 7px;
  border-left: none;
}

.group.tight {
  gap: 7px;
  padding-left: 4px;
}

.group.number {
  gap: 4px;
}

.big {
  display: flex;
  flex-direction: column;
  align-items: center;
  justify-content: space-between;
  padding-top: 3px;
}

.big .icon {
  width: 16px;
  height: 16px;
}

.big span {
  display: flex;
  align-items: center;
  gap: 3px;
  line-height: 14px;
  white-space: nowrap;
}

.stack {
  display: flex;
  flex-direction: column;
}

.stack .tool {
  height: 18px;
}

.line {
  display: flex;
  align-items: center;
  height: 18px;
}

.pick {
  display: flex;
  align-items: center;
  height: 15px;
  padding-right: 3px;
  border: 1px solid #eceeef;
}

.pick select {
  flex: 1;
  padding-left: 1px;
  appearance: none;
}

.pick.font {
  width: 82px;
}

.pick.size {
  width: 49px;
}

.pick.format {
  width: 92px;
}

.cell {
  display: flex;
  align-items: center;
  justify-content: center;
  width: 17px;
  height: 17px;
}

.cell.split {
  width: 23px;
  gap: 3px;
}

.cell.on {
  background: #dcdfe4;
}

.cell.letter {
  font-size: 12px;
}

.number .cell.letter {
  font-size: 10px;
}

.letter sup {
  font-size: 8px;
}

.font-color {
  line-height: 10px;
  border-bottom: 2px solid #e0393c;
}

.cell.decimals {
  font-size: 6px;
  line-height: 6px;
}

/* Paleta de cores */
.fill-wrap {
  position: relative;
}

.palette {
  position: absolute;
  z-index: 5;
  top: 17px;
  left: 0;
  width: 129px;
  border: 1px solid #d4d6d8;
  background: #fff;
  box-shadow: 0 1px 4px rgba(0, 0, 0, 0.3);
}

.no-fill, .other {
  display: flex;
  align-items: center;
  gap: 6px;
  width: 100%;
  padding-left: 5px;
}

.no-fill {
  height: 14px;
  background: #e9ebee;
}

.icon.none {
  width: 9px;
  height: 9px;
}

.palette-title {
  padding-left: 6px;
  line-height: 17px;
  background: #f4f5f7;
}

.palette-title.standard {
  margin-top: 5px;
}

.swatches {
  display: grid;
  grid-template-columns: repeat(10, 9px);
  gap: 1px;
  justify-content: space-between;
  padding: 4px 6px 0 3px;
}

.swatches button {
  height: 8px;
}

.swatches.shades {
  padding-top: 7px;
}

.other {
  height: 20px;
  margin-top: 5px;
  border-top: 1px solid #e4e6e8;
}

.pointer {
  position: absolute;
  top: 55px;
  left: 99px;
  width: 10px;
  height: 14px;
}

/* Área de trabalho */
.work {
  display: flex;
}

.book {
  flex: 1;
  min-width: 0;
}

.formula {
  display: flex;
  align-items: center;
  gap: 7px;
  height: 27px;
  padding: 3px 3px 0 0;
}

.name-box {
  display: flex;
  align-items: center;
  width: 105px;
  height: 16px;
  margin-right: 23px;
  padding-right: 2px;
  border: 1px solid #eceef0;
  background: #fff;
}

.name-box input {
  flex: 1;
  min-width: 0;
  text-align: center;
  font-family: "Liberation Mono", monospace;
  font-size: 9px;
}

.fx {
  font-size: 11px;
  font-style: italic;
}

.formula-input {
  flex: 1;
  height: 16px;
  padding-left: 7px;
  border: 1px solid #eceef0;
  font-size: 10px;
  background: #fff;
}

.sheet {
  display: flex;
}

.cells {
  position: relative;
  flex: 1;
}

#grid {
  width: 100%;
  table-layout: fixed;
  border-spacing: 0;
  background: #fff;
}

.col-num { width: 22px; }
.col-a { width: 69px; }
.col-b { width: 125px; }
.col-c { width: 85px; }
.col-d { width: 87px; }
.col-e { width: 48px; }
.col-f { width: 49px; }
.col-g { width: 39px; }
.col-h { width: 80px; }
.col-end { width: 19px; }

#grid thead th {
  height: 16px;
  font-size: 9px;
  font-weight: normal;
  border-right: 1px solid #dcdee0;
  border-bottom: 1px solid #c8cacc;
  background: #f4f5f7;
}

#grid thead .picked {
  color: #28a880;
  border-right-color: #d0d4d6;
  background: #d0d4d6;
}

#grid thead .corner {
  background: linear-gradient(135deg, #f4f5f7 65%, #b0b4b8 65%);
}

#grid tbody th {
  height: 31px;
  font-size: 9px;
  font-weight: normal;
  border-right: 1px solid #c8cacc;
  border-bottom: 1px solid #e4e6e8;
  background: #f4f5f7;
}

#grid td {
  padding-top: 3px;
  text-align: center;
  font-family: "Liberation Mono", "Noto Sans CJK SC", monospace;
  font-size: 9px;
  white-space: nowrap;
  color: #555;
  border-right: 1px solid #d6d6d6;
  border-bottom: 1px solid #d6d6d6;
}

#grid .tall th {
  height: 34px;
}

#grid .filled th {
  color: #28a880;
  background: #d2d9de;
}

#grid .filled td:nth-child(-n+5) {
  font-size: 10px;
  border-color: #666;
  background: #d8d8d8;
}

#grid .filled:first-child td:nth-child(2) {
  background: #fff;
}

.selection {
  position: absolute;
  top: 15px;
  left: 21px;
  width: 368px;
  height: 281px;
  border: 2px solid #1aa576;
}

.vscroll {
  display: flex;
  flex-direction: column;
  align-items: center;
  justify-content: space-between;
  width: 12px;
  padding: 16px 0 4px;
}

.vscroll .thumb {
  width: 8px;
  height: 446px;
  margin: 8px 0 auto;
  background: #d4d7da;
}

.sheet-tabs {
  display: flex;
  align-items: center;
  gap: 8px;
  height: 18px;
  padding: 0 3px 0 8px;
}

.sheet-tabs a {
  width: 48px;
  margin-left: 5px;
  text-align: center;
  font-weight: bold;
  line-height: 18px;
  color: #12a06c;
  background: #fff;
}

.sheet-tabs .tool {
  margin-left: -4px;
}

.hscroll {
  display: flex;
  align-items: center;
  gap: 8px;
  width: 506px;
  margin-right: 14px;
  margin-left: auto;
  padding: 0 10px;
  border: solid #999;
  border-width: 0 1px;
  line-height: 6px;
}

.hscroll .thumb {
  flex: 1;
  height: 8px;
  margin-right: 8px;
  background: #d0d4d8;
}

.side {
  display: flex;
  flex-direction: column;
  align-items: center;
  gap: 12px;
  width: 28px;
  padding-top: 23px;
  border-left: 1px solid #dfe1e3;
  color: #666;
}

.side-more {
  margin-top: auto;
  margin-bottom: 6px;
}

/* Barra de status */
.status {
  display: flex;
  align-items: center;
  gap: 18px;
  height: 18px;
  padding: 0 9px 0 8px;
  border-top: 1px solid #e6e8ea;
}

.status-right {
  display: flex;
  align-items: center;
  gap: 8px;
  margin-left: auto;
}

.pair {
  display: flex;
  align-items: center;
  gap: 4px;
}

.views {
  display: flex;
  margin: 0 6px;
}

input[type="range"] {
  width: 94px;
  height: 10px;
  appearance: none;
}

input[type="range"]::-webkit-slider-runnable-track {
  height: 1px;
  background: #a8acb0;
}

input[type="range"]::-webkit-slider-thumb {
  width: 8px;
  height: 8px;
  margin-top: -4px;
  appearance: none;
  border: 1px solid #777;
  border-radius: 50%;
  background: #fff;
}

/* Barra de tarefas */
.taskbar {
  display: flex;
  height: 28px;
  color: #fff;
  background: #27382f;
}

.start {
  display: flex;
  align-items: center;
  width: 31px;
  padding-left: 9px;
}

.start svg {
  width: 12px;
  height: 12px;
}

.task-search {
  display: flex;
  align-items: center;
  gap: 6px;
  width: 233px;
  padding-left: 9px;
  color: #555;
  background: #f0f0f0;
}

.task-search input {
  flex: 1;
  min-width: 0;
  font-size: 9px;
}

.task-search input::placeholder {
  color: #555;
}

.bears {
  width: 50px;
  height: 20px;
  margin-bottom: 8px;
}

.apps {
  display: flex;
}

.apps span {
  display: flex;
  align-items: center;
  justify-content: center;
  width: 33px;
}

.apps svg {
  width: 16px;
  height: 16px;
}

.apps .running {
  background: #56645d;
}

.ps {
  width: 15px;
  height: 15px;
  border: 1px solid #31a8ff;
  line-height: 13px;
  text-align: center;
  color: #31a8ff;
  background: #001e36;
}

.tray {
  display: flex;
  align-items: center;
  margin-left: auto;
}

.tray span {
  display: flex;
  justify-content: center;
  width: 16px;
  font-size: 10px;
}

.tray svg {
  width: 11px;
  height: 11px;
}

.tray .sogou {
  width: 12px;
  margin-left: 6px;
  font-weight: bold;
  background: #e8632a;
}

.clock {
  width: 62px;
  padding-top: 1px;
  text-align: center;
  font-size: 9px;
}

.notice {
  width: 14px;
  height: 14px;
  margin: 6px 15px 0 1px;
}

.timer {
  position: absolute;
  left: 642px;
  bottom: 45px;
  width: 30px;
  height: 30px;
  border-radius: 50%;
  line-height: 30px;
  text-align: center;
  font-size: 9px;
  color: #e8f4ff;
  background: linear-gradient(#2b7df0, #4aa6fb);
  box-shadow: 0 0 0 2px #d3effc;
}

.stand {
  flex: 1;
  width: 76px;
  margin: 0 auto;
  background: linear-gradient(90deg, #8a8a8a, #f0f0f0 4%, #f4f4f4 11%, #a8a8a8 16%, #d8d8d8 24%, #dedede 78%, #a0a0a0 84%, #efefef 92%, #777);
  box-shadow: 8px 0 20px rgba(80, 20, 100, 0.5);
}

/* Sobreposições */
.red-arrow {
  position: absolute;
  z-index: 6;
  top: 179px;
  left: 502px;
  width: 122px;
  height: 110px;
}

.headline {
  position: absolute;
  z-index: 6;
  top: 401px;
  left: 66px;
  font-family: "Noto Sans CJK SC", sans-serif;
  font-size: 73px;
  font-weight: 900;
  font-style: italic;
  line-height: 90px;
  white-space: nowrap;
  color: #fff;
  -webkit-text-stroke: 4px #111;
  paint-order: stroke fill;
}

.caption {
  position: absolute;
  z-index: 6;
  top: 769px;
  left: 0;
  width: 100%;
  text-align: center;
  font-family: "Noto Sans CJK SC", sans-serif;
  font-size: 46px;
  font-weight: 500;
  line-height: 60px;
  color: #fff;
  text-shadow: 2px 2px 3px #333;
}

.watermark {
  position: absolute;
  z-index: 6;
  right: 84px;
  bottom: 32px;
  width: 286px;
  color: rgba(255, 255, 255, 0.75);
}

.brand {
  display: flex;
  align-items: flex-end;
}

.bai {
  font-family: "Liberation Sans", sans-serif;
  font-size: 63px;
  font-weight: bold;
  line-height: 52px;
}

.paw {
  position: relative;
}

.paw svg {
  display: block;
  width: 84px;
  height: 90px;
}

.paw b {
  position: absolute;
  left: 17px;
  bottom: 3px;
  font-family: "Liberation Sans", sans-serif;
  font-size: 42px;
  line-height: 42px;
  color: #b052bb;
}

.jingyan {
  margin-left: 4px;
  font-family: "Noto Sans CJK SC", sans-serif;
  font-size: 47px;
  font-weight: 900;
  line-height: 52px;
}

.site {
  font-family: "Noto Sans", sans-serif;
  font-size: 33px;
  line-height: 48px;
  white-space: nowrap;
}
```
